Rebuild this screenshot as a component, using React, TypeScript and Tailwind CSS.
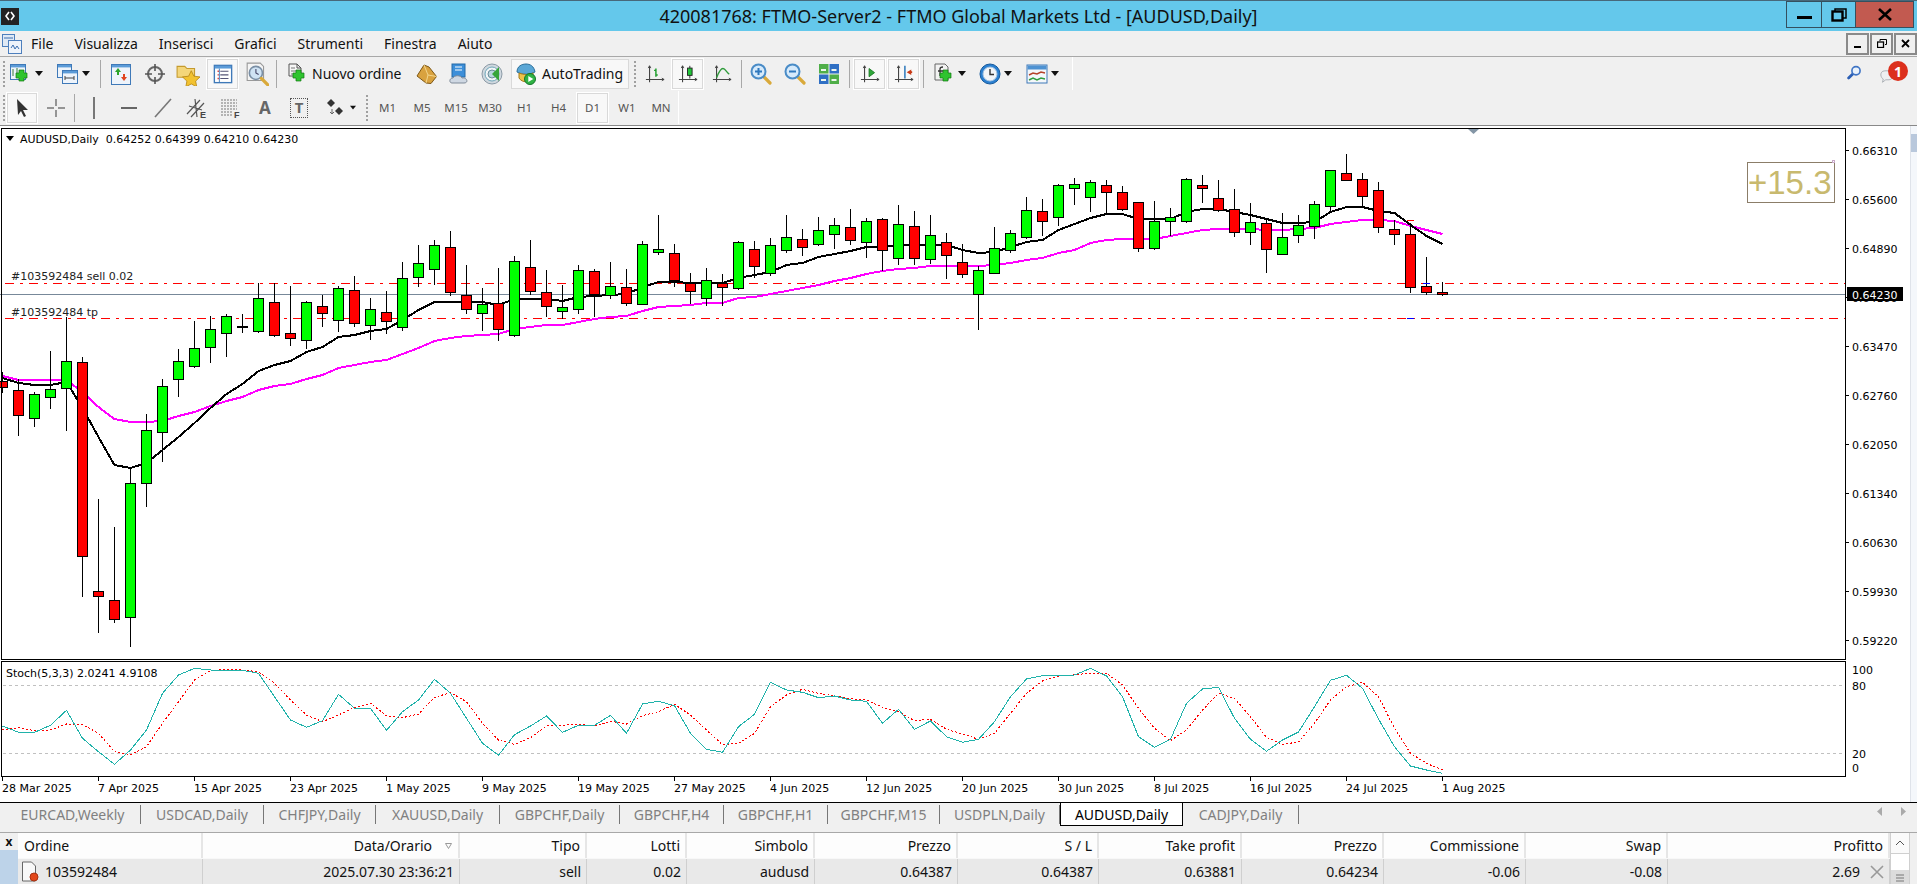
import type { ReactNode } from "react";

// [high, bodyTop, bodyBottom, low, green?]
const BARS: [number, number, number, number, number][] = [
  [372, 381, 387, 393, 0], [379, 390, 415, 436, 0], [392, 394, 418, 427, 1], [351, 389, 397, 409, 1], [317, 361, 388, 431, 1],
  [357, 362, 556, 597, 0], [499, 591, 596, 633, 0], [527, 600, 619, 623, 0], [467, 483, 617, 647, 1], [414, 430, 483, 507, 1],
  [379, 386, 432, 462, 1], [349, 361, 379, 397, 1], [321, 348, 366, 368, 1], [316, 329, 347, 363, 1], [314, 316, 333, 357, 1],
  [314, 326, 327, 333, 1], [283, 298, 331, 333, 1], [283, 302, 335, 337, 0], [286, 333, 338, 346, 0], [301, 302, 340, 349, 1],
  [295, 306, 313, 327, 0], [286, 288, 320, 332, 1], [276, 290, 323, 327, 0], [298, 309, 325, 340, 1], [291, 312, 321, 334, 0],
  [262, 278, 327, 331, 1], [245, 263, 277, 287, 1], [240, 245, 269, 285, 1], [231, 247, 292, 296, 0], [265, 295, 309, 314, 0],
  [288, 304, 313, 331, 1], [268, 303, 329, 341, 0], [256, 261, 335, 337, 1], [240, 267, 291, 295, 0], [270, 292, 306, 317, 0],
  [285, 307, 311, 319, 1], [265, 270, 309, 314, 1], [269, 271, 294, 317, 0], [262, 286, 295, 299, 1], [269, 287, 303, 306, 0],
  [241, 244, 304, 304, 1], [215, 249, 252, 255, 1], [244, 253, 280, 287, 0], [273, 283, 291, 304, 0], [268, 280, 298, 306, 1],
  [274, 283, 287, 306, 0], [241, 242, 288, 290, 1], [241, 249, 266, 278, 0], [238, 245, 273, 276, 1], [215, 237, 250, 253, 1],
  [229, 239, 247, 256, 0], [217, 230, 244, 246, 1], [218, 225, 234, 249, 1], [209, 227, 240, 245, 0], [218, 221, 242, 258, 1],
  [218, 219, 250, 271, 0], [205, 224, 258, 265, 1], [211, 226, 258, 265, 0], [215, 235, 259, 264, 1], [233, 242, 255, 279, 0],
  [244, 262, 274, 278, 0], [266, 270, 294, 330, 1], [227, 248, 273, 273, 1], [230, 233, 250, 253, 1], [197, 210, 237, 239, 1],
  [199, 211, 221, 236, 0], [184, 185, 217, 226, 1], [178, 184, 188, 205, 1], [180, 182, 197, 212, 1], [180, 185, 192, 214, 0],
  [186, 192, 209, 211, 0], [202, 202, 248, 252, 0], [201, 221, 248, 250, 1], [208, 217, 221, 236, 1], [178, 179, 221, 223, 1],
  [175, 185, 188, 203, 0], [180, 198, 210, 212, 0], [189, 209, 232, 237, 0], [203, 222, 232, 245, 1], [220, 223, 249, 273, 0],
  [213, 237, 254, 255, 1], [215, 225, 235, 243, 1], [201, 204, 226, 239, 1], [170, 170, 206, 212, 1], [154, 173, 180, 181, 0],
  [173, 179, 196, 206, 0], [182, 190, 227, 233, 0], [220, 229, 234, 245, 0], [223, 234, 287, 293, 0], [257, 286, 292, 295, 0],
  [282, 292, 294, 296, 0],
];

const MA_FAST = [378, 383, 385, 385, 382, 408, 437, 465, 468, 463, 450, 437, 423, 408, 394, 384, 371, 365, 361, 352, 347, 337, 335, 331, 329, 320, 310, 302, 302, 302, 302, 305, 299, 299, 299, 301, 297, 296, 295, 294, 287, 282, 282, 283, 283, 283, 278, 275, 272, 265, 263, 257, 254, 251, 247, 247, 245, 245, 245, 245, 250, 253, 252, 247, 242, 240, 230, 224, 218, 214, 214, 219, 219, 219, 212, 209, 209, 212, 215, 219, 223, 223, 222, 212, 207, 207, 211, 213, 225, 236, 244];
const MA_SLOW = [376, 380, 380, 380, 380, 392, 407, 419, 422, 422, 421, 416, 412, 406, 401, 397, 390, 386, 384, 379, 375, 368, 365, 362, 360, 354, 348, 341, 338, 336, 335, 334, 329, 327, 325, 325, 322, 319, 317, 316, 311, 307, 306, 305, 303, 303, 298, 297, 294, 291, 288, 285, 281, 278, 274, 271, 269, 268, 266, 266, 266, 266, 265, 263, 260, 258, 253, 250, 243, 240, 239, 239, 239, 236, 233, 230, 229, 229, 229, 230, 230, 229, 228, 224, 222, 220, 220, 221, 226, 230, 234];
// stochastic lines, pixel rows under y=650 at 3x
const STOCH_MAIN = [228, 247, 247, 226, 181, 265, 305, 343, 300, 240, 130, 75, 55, 60, 61, 61, 70, 140, 210, 232, 212, 133, 175, 175, 241, 185, 150, 88, 130, 205, 280, 316, 254, 228, 198, 247, 226, 226, 196, 250, 162, 154, 167, 250, 298, 307, 230, 193, 97, 120, 127, 143, 138, 150, 154, 220, 178, 238, 213, 260, 277, 268, 215, 140, 87, 77, 76, 75, 55, 78, 140, 260, 292, 268, 160, 117, 112, 205, 268, 304, 270, 246, 170, 91, 76, 115, 207, 290, 348, 360, 370];
const STOCH_SIGNAL = [240, 233, 242, 240, 222, 224, 250, 305, 314, 290, 220, 155, 90, 62, 58, 60, 65, 100, 150, 195, 215, 195, 172, 160, 197, 203, 192, 142, 128, 155, 220, 270, 283, 263, 228, 226, 223, 228, 214, 222, 197, 185, 163, 195, 240, 284, 280, 250, 170, 135, 118, 130, 138, 146, 150, 172, 185, 212, 208, 238, 252, 268, 250, 190, 130, 93, 78, 74, 70, 70, 105, 175, 235, 272, 240, 180, 130, 145, 200, 262, 283, 276, 220, 150, 110, 97, 140, 235, 310, 340, 360];

const PRICES = ["0.66310", "0.65600", "0.64890", "0.64180", "0.63470", "0.62760", "0.62050", "0.61340", "0.60630", "0.59930", "0.59220"];
const DATES = ["28 Mar 2025", "7 Apr 2025", "15 Apr 2025", "23 Apr 2025", "1 May 2025", "9 May 2025", "19 May 2025", "27 May 2025", "4 Jun 2025", "12 Jun 2025", "20 Jun 2025", "30 Jun 2025", "8 Jul 2025", "16 Jul 2025", "24 Jul 2025", "1 Aug 2025"];
const MENU = ["File", "Visualizza", "Inserisci", "Grafici", "Strumenti", "Finestra", "Aiuto"];
const TABS: [string, string][] = [
  ["EURCAD,Weekly", "w-[136px]"], ["USDCAD,Daily", "w-[123px]"], ["CHFJPY,Daily", "w-[112px]"], ["XAUUSD,Daily", "w-[124px]"],
  ["GBPCHF,Daily", "w-[120px]"], ["GBPCHF,H4", "w-[104px]"], ["GBPCHF,H1", "w-[104px]"], ["GBPCHF,M15", "w-[112px]"], ["USDPLN,Daily", "w-[120px]"],
];
const COLS = [
  ["Ordine", "103592484"], ["Data/Orario", "2025.07.30 23:36:21"], ["Tipo", "sell"], ["Lotti", "0.02"], ["Simbolo", "audusd"], ["Prezzo", "0.64387"],
  ["S / L", "0.64387"], ["Take profit", "0.63881"], ["Prezzo", "0.64234"], ["Commissione", "-0.06"], ["Swap", "-0.08"], ["Profitto", "2.69"],
];
const GRID = "grid grid-cols-[185px_257px_127px_100px_128px_143px_141px_143px_142px_142px_142px_222px]";

const pts = (ys: number[]) => ys.map((y, i) => `${2.5 + 16 * i},${y}`).join(" ");
const stochPts = (vs: number[]) => vs.map((v, i) => `${2.5 + 16 * i},${(650 + v / 3).toFixed(1)}`).join(" ");

function I({ children, s = 22 }: { children: ReactNode; s?: number }) {
  return (
    <svg width={s} height={s} viewBox="0 0 22 22" fill="none">
      {children}
    </svg>
  );
}

const Plus = ({ x = 11, y = 11 }: { x?: number; y?: number }) => (
  <path d={`M${x + 3} ${y}h5v3h3v5h-3v3h-5v-3h-3v-5h3z`} fill="#2fc42f" stroke="#127a12" strokeWidth=".7" />
);
const Axes = () => (
  <>
    <path d="M5 2v18M1 17h20" stroke="#444" strokeWidth="1.2" />
    <path d="M3.5 4.5 5 2l1.5 2.5M18.5 15.5 21 17l-2.5 1.5" stroke="#444" strokeWidth="1" />
  </>
);
const Win = ({ x, y, w, h }: { x: number; y: number; w: number; h: number }) => (
  <>
    <rect x={x + 0.5} y={y + 0.5} width={w} height={h} fill="#eef4fb" stroke="#3f79b8" />
    <rect x={x + 1} y={y + 1} width={w - 1} height={2.4} fill="#5b9bd8" />
  </>
);
const Magnifier = ({ minus }: { minus?: boolean }) => (
  <I>
    <path d="m13 13 7 7" stroke="#d9a93a" strokeWidth="3.2" strokeLinecap="round" />
    <circle cx="8.5" cy="8.5" r="7" fill="#d6eafb" stroke="#4a8cc7" strokeWidth="2" />
    <path d={minus ? "M5 8.5h7" : "M5 8.5h7M8.5 5v7"} stroke="#2f78bd" strokeWidth="2" />
  </I>
);

const Caret = () => (
  <svg width="8" height="5" viewBox="0 0 8 5">
    <path d="M0 0h8L4 5z" fill="#111" />
  </svg>
);
const Sep = () => <div className="h-[28px] w-px bg-[#a8a8a8]" />;
const Handle = ({ cls = "" }: { cls?: string }) => <div className={`h-[26px] w-[2px] border-l-2 border-dotted border-[#a0a0a0] ${cls}`} />;

function Cell({ w, ml = "", sel, children }: { w: string; ml?: string; sel?: boolean; children: ReactNode }) {
  return (
    <div className={`flex h-full items-center justify-center ${w} ${ml}`}>
      {sel ? <div className="flex h-[30px] w-full items-center justify-center border border-[#d9d9d9] bg-[#f8f8f8] outline outline-white">{children}</div> : children}
    </div>
  );
}

function Toolbars() {
  return (
    <div className="flex shrink-0 flex-col text-[#111]">
      {/* standard + charts toolbar */}
      <div className="flex h-[33px] items-center bg-[#f0f0f0]">
        <div className="flex h-full w-[1073px] items-center border-r border-white">
          <div className="flex w-[7px] justify-center"><Handle /></div>
          <Cell w="w-[26px]">
            <I><Win x={1} y={1} w={15} h={15} /><path d="M4 6v7M8 5v6" stroke="#3a7a3a" /><Plus x={7} y={7} /></I>
          </Cell>
          <Cell w="w-[12px]"><Caret /></Cell>
          <Cell w="w-[30px]" ml="ml-[7px]">
            <I><Win x={1} y={1} w={14} h={13} /><Win x={6} y={7} w={15} h={13} /><path d="M9 15h9M9 13v4M18 13v4" stroke="#444" /></I>
          </Cell>
          <Cell w="w-[8px]"><Caret /></Cell>
          <div className="ml-[10px]"><Sep /></div>
          <Cell w="w-[30px]" ml="ml-[5px]">
            <I><Win x={1} y={1} w={19} h={20} /><path d="m8 5 3 4H9v3H7V9H5z" fill="#2ca52c" /><path d="m14 18-3-4h2v-3h2v3h2z" fill="#e0451f" /></I>
          </Cell>
          <Cell w="w-[34px]" ml="ml-[2px]">
            <I><circle cx="11" cy="11" r="7" stroke="#666" strokeWidth="2" /><path d="M11 1v7M11 14v7M1 11h7M14 11h7" stroke="#555" strokeWidth="1.6" /></I>
          </Cell>
          <Cell w="w-[32px]">
            <I s={24}><path d="M1 4h7l2 2h7v8H1z" fill="#f4d67a" stroke="#c59a2d" /><path d="m14 8 2.4 5 5.6.7-4 3.8 1 5.3-5-2.7-5 2.7 1-5.3-4-3.8 5.6-.7z" fill="#f2c230" stroke="#b98a18" strokeWidth=".8" /></I>
          </Cell>
          <Cell w="w-[31px]" ml="ml-[3px]" sel>
            <I s={20}><rect x="1.5" y="1.5" width="19" height="19" fill="#fff" stroke="#3f79b8" strokeWidth="1.5" /><rect x="2" y="2" width="18" height="3" fill="#5b9bd8" /><path d="M5 8h1.5M5 12h1.5M5 16h1.5" stroke="#d33" strokeWidth="1.5" /><path d="M8 8h9M8 12h9M8 16h9" stroke="#557" strokeWidth="1.2" /><path d="M7 5v15" stroke="#3f79b8" /></I>
          </Cell>
          <Cell w="w-[38px]">
            <I s={24}><path d="M2 1h12l3 3v13H2z" fill="#f4f4f4" stroke="#999" /><circle cx="10" cy="10" r="6" fill="#cfe3f4" stroke="#7a8fa5" strokeWidth="1.5" /><path d="M10 6.5V10l2.5 1.5" stroke="#446" /><path d="m15 15 7 7" stroke="#d9a93a" strokeWidth="3" strokeLinecap="round" /></I>
          </Cell>
          <Sep />
          <Cell w="w-[22px]" ml="ml-[10px]">
            <I><path d="M2 1h8l4 4v8H2zM10 1v4h4" fill="#f6f6f6" stroke="#555" /><path d="M4 5h4M4 8h7M4 11h4" stroke="#777" /><Plus x={6} y={7} /></I>
          </Cell>
          <span className="ml-[3px] w-[94px] whitespace-nowrap text-[14px]">Nuovo ordine</span>
          <Cell w="w-[42px]">
            <I><path d="M8 2 1 13l9 7 5 .5 5.5-7L13 4z" fill="#d9a23f" stroke="#7d5716" /><path d="m8 2 4 10 8.5 1.5M12 12l-2 8" stroke="#f3d68d" /></I>
          </Cell>
          <Cell w="w-[22px]">
            <I><rect x="4" y="1" width="13" height="13" fill="#3d8fd9" stroke="#256aa8" /><path d="M7 4h7M7 7h7" stroke="#fff" /><path d="M4 20c-3 0-3-5 1-5 1-3 8-3 9 0 5-1 7 5 2 5z" fill="#cfd8e3" stroke="#7f8b99" /></I>
          </Cell>
          <Cell w="w-[22px]" ml="ml-[11px]">
            <I><circle cx="11" cy="11" r="10" fill="#cfd8df" stroke="#8b9aa6" /><circle cx="11" cy="11" r="7" fill="#f2f5f7" stroke="#6ea6b8" /><circle cx="11" cy="11" r="4" fill="#b9d6de" stroke="#6a8b99" /><path d="M11 11 18 4v14z" fill="#35a53a" /></I>
          </Cell>
          <div className="ml-[8px] flex h-[30px] w-[118px] items-center border border-[#d9d9d9] bg-[#f8f8f8] pl-[3px]">
            <I><path d="M2 9c0-6 5-8 9-8s8 2 9 8c-6 3-12 3-18 0z" fill="#5aa7d6" stroke="#2d6f99" /><path d="M4 10c5 2 10 2 14 0v5c-3 5-11 5-14 0z" fill="#efc24a" stroke="#a67c1a" /><circle cx="15" cy="16" r="5.5" fill="#2fb344" stroke="#16752a" /><path d="m13.3 13 5 3-5 3z" fill="#fff" /></I>
            <span className="ml-[5px] whitespace-nowrap text-[14px]">AutoTrading</span>
          </div>
          <Handle cls="ml-[5px]" />
          <Cell w="w-[34px]" ml="ml-[2px]">
            <I s={20}><Axes /><path d="M12 5v9M10 7h2M12 12h2" stroke="#1f9d2c" strokeWidth="1.6" /></I>
          </Cell>
          <Cell w="w-[31px]" sel>
            <I s={20}><Axes /><path d="M13 2v14" stroke="#222" /><rect x="10.5" y="4.5" width="5" height="8" fill="#22c53a" stroke="#222" /></I>
          </Cell>
          <Cell w="w-[38px]">
            <I s={20}><Axes /><path d="M5 15c2-5 4-10 7-10s4 5 7 6" stroke="#2e9b3a" strokeWidth="1.5" /></I>
          </Cell>
          <Sep />
          <Cell w="w-[38px]"><Magnifier /></Cell>
          <Cell w="w-[30px]"><Magnifier minus /></Cell>
          <Cell w="w-[38px]">
            <I><rect x="1" y="1" width="9.5" height="9.5" fill="#4fae48" /><rect x="11.5" y="1" width="9.5" height="9.5" fill="#2f6fc4" /><rect x="1" y="11.5" width="9.5" height="9.5" fill="#2f6fc4" /><rect x="11.5" y="11.5" width="9.5" height="9.5" fill="#4fae48" /><path d="M3 6h5v2H3zM13.5 6h5v2h-5zM3 16h5v2H3zM13.5 16h5v2h-5z" fill="#eef6ee" /></I>
          </Cell>
          <div className="ml-px"><Sep /></div>
          <Cell w="w-[31px]" ml="ml-[4px]" sel>
            <I s={20}><Axes /><path d="M10 5v9l6-4.5z" fill="#2fa83a" stroke="#1a7a25" /></I>
          </Cell>
          <Cell w="w-[31px]" ml="ml-[3px]" sel>
            <I s={20}><Axes /><path d="M12 2v14" stroke="#2573b8" strokeWidth="1.6" /><path d="m14 9 5-3v2h1v2h-1v2z" fill="#c83a16" /></I>
          </Cell>
          <div className="ml-[4px]"><Sep /></div>
          <Cell w="w-[24px]" ml="ml-[8px]">
            <I><path d="M2 1h10l3 3v13H2z" fill="#f2f2f2" stroke="#666" /><path d="M7 13V6q0-2 3-2M5 8h5" stroke="#333" strokeWidth="1.3" /><Plus x={7} y={7} /></I>
          </Cell>
          <Cell w="w-[12px]"><Caret /></Cell>
          <Cell w="w-[24px]" ml="ml-[10px]">
            <I><circle cx="11" cy="11" r="10" fill="#2a7fd0" stroke="#175a9c" /><circle cx="11" cy="11" r="7" fill="#f2f5f8" stroke="#a9c6e2" /><path d="M11 6v5.5h4" stroke="#333" strokeWidth="1.4" /></I>
          </Cell>
          <Cell w="w-[12px]"><Caret /></Cell>
          <Cell w="w-[24px]" ml="ml-[11px]">
            <I><rect x="1" y="2" width="20" height="18" fill="#f4f7fa" stroke="#3f79b8" /><rect x="1.5" y="2.5" width="19" height="4" fill="#4e92d2" /><path d="m3 12 4-2 4 1 4-2 4 1" stroke="#b5432a" strokeWidth="1.4" /><path d="m3 17 4-2 4 2 4-2 4 1" stroke="#2f9d40" strokeWidth="1.4" /></I>
          </Cell>
          <Cell w="w-[12px]"><Caret /></Cell>
        </div>
        <div className="relative flex-1 self-stretch">
          <div className="absolute left-[774px] top-[8px]">
            <I s={18}><path d="m8 10-6 6" stroke="#2c5fb5" strokeWidth="3.4" strokeLinecap="round" /><circle cx="11" cy="7" r="5" fill="#eaf2fb" stroke="#3f74c4" strokeWidth="2" /></I>
          </div>
          <div className="absolute left-[807px] top-[13px]">
            <I s={18}><path d="M6 1c-4 0-5 3-5 5s2 5 3 5l-1 4 4-3h4c3 0 5-3 5-6s-3-5-5-5z" fill="#eef0f2" stroke="#a0a6ac" /></I>
          </div>
          <div className="absolute left-[815px] top-[4px] flex h-[20px] w-[20px] items-center justify-center rounded-full bg-[#dc2f1c] text-[14px] font-bold text-white">1</div>
        </div>
      </div>
      {/* line studies + periods toolbar */}
      <div className="mt-px flex h-[33px] items-center bg-[#f0f0f0]">
        <div className="flex h-full w-[679px] items-center border-r border-white">
          <div className="flex w-[7px] justify-center"><Handle /></div>
          <Cell w="w-[30px]" sel>
            <I><path d="m6 2 1 16 3-4 3 6 2-1-3-6h5z" fill="#333" /></I>
          </Cell>
          <Cell w="w-[37px]">
            <I><path d="M11 2v7M11 13v7M2 11h7M13 11h7" stroke="#777" strokeWidth="1.5" /></I>
          </Cell>
          <Sep />
          <Cell w="w-[37px]"><div className="h-[22px] w-[2px] bg-[#777]" /></Cell>
          <Cell w="w-[34px]"><div className="h-[2px] w-[16px] bg-[#666]" /></Cell>
          <Cell w="w-[34px]"><I><path d="m3 20 16-18" stroke="#777" strokeWidth="1.6" /></I></Cell>
          <Cell w="w-[34px]">
            <I><path d="m1 17 13-14M5 20 18 6M9 2l2 18M3 9l13 4" stroke="#555" strokeWidth="1.2" /><text x="14" y="21" fontSize="9" fontWeight="700" fill="#444" className="font-['Liberation_Sans',sans-serif]">E</text></I>
          </Cell>
          <Cell w="w-[34px]">
            <I><path d="M1 3h16M1 6h16M1 9h16M1 12h16M1 15h12M1 18h12" stroke="#777" strokeDasharray="2 1" /><text x="14" y="21" fontSize="9" fontWeight="700" fill="#444" className="font-['Liberation_Sans',sans-serif]">F</text></I>
          </Cell>
          <Cell w="w-[34px]"><span className="text-[17px] font-bold leading-none text-[#666]">A</span></Cell>
          <Cell w="w-[34px]">
            <div className="flex h-[20px] w-[18px] items-center justify-center border border-dotted border-[#555] text-[15px] font-bold leading-none text-[#666]">T</div>
          </Cell>
          <Cell w="w-[30px]" ml="ml-[4px]">
            <I><path d="m7 2 4 4-4 4-4-4z" fill="#333" /><path d="m15 10 4 4-4 4-4-4z" fill="#333" /><path d="M8 12v5M6 15l2 2 2-2" stroke="#666" /></I>
          </Cell>
          <Cell w="w-[6px]"><Caret /></Cell>
          <Handle cls="ml-[10px]" />
          <div className="ml-[2px] flex h-full items-center text-[11.5px] text-[#555]">
            <Cell w="w-[35px]">M1</Cell>
            <Cell w="w-[34px]">M5</Cell>
            <Cell w="w-[34px]">M15</Cell>
            <Cell w="w-[34px]">M30</Cell>
            <Cell w="w-[35px]">H1</Cell>
            <Cell w="w-[33px]">H4</Cell>
            <Cell w="w-[31px]" ml="ml-[2px]" sel>D1</Cell>
            <Cell w="w-[34px]" ml="ml-[2px]">W1</Cell>
            <Cell w="w-[34px]">MN</Cell>
          </div>
        </div>
      </div>
    </div>
  );
}

function Chart() {
  return (
    <svg width="1910" height="676" viewBox="0 126 1910 676" className="block font-['DejaVu_Sans',sans-serif]" fontSize="11">
      <g shapeRendering="crispEdges">
        <line x1="0" x2="1845" y1="294.5" y2="294.5" stroke="#778899" />
        <line x1="5" x2="1845" y1="283.5" y2="283.5" stroke="#ff0000" strokeDasharray="9 6 3 6" />
        <line x1="5" x2="1845" y1="318.5" y2="318.5" stroke="#ff0000" strokeDasharray="9 6 3 6" />
        <polyline points={pts(MA_SLOW)} fill="none" stroke="#ff00ff" strokeWidth="2" />
        <polyline points={pts(MA_FAST)} fill="none" stroke="#000" strokeWidth="2" />
        {BARS.map(([hi, top, bot, lo, up], i) => {
          const x = 2 + 16 * i;
          return (
            <g key={i}>
              <rect x={x} y={hi} width="1" height={lo - hi} fill="#000" />
              <rect x={x - 4.5} y={top + 0.5} width="10" height={bot - top} fill={up ? "#00ff00" : "#ff0000"} stroke="#000" />
            </g>
          );
        })}
        <rect x="1407" y="318" width="7" height="1" fill="#0000ff" />
        <rect x="1423" y="283" width="7" height="1" fill="#0000ff" />
        <rect x="1407" y="220" width="7" height="1" fill="#ff0000" />
        <rect x="1.5" y="128.5" width="1844" height="531" fill="none" stroke="#000" />
        <rect x="1.5" y="661.5" width="1844" height="115" fill="none" stroke="#000" />
        {PRICES.map((p, i) => (
          <rect key={p} x="1846" y={150 + 49 * i} width="3" height="1" fill="#000" />
        ))}
        {DATES.map((d, i) => (
          <rect key={d} x={2 + 96 * i} y="777" width="1" height="4" fill="#000" />
        ))}
        <line x1="3" x2="1845" y1="685.5" y2="685.5" stroke="#c0c0c0" strokeDasharray="3 3" />
        <line x1="3" x2="1845" y1="753.5" y2="753.5" stroke="#c0c0c0" strokeDasharray="3 3" />
        <polyline points={stochPts(STOCH_SIGNAL)} fill="none" stroke="#ff0000" strokeDasharray="2 2" />
        <polyline points={stochPts(STOCH_MAIN)} fill="none" stroke="#20b2aa" />
      </g>
      <path d="M1468 129h11l-5.5 5z" fill="#8496a6" />
      <path d="M6 136h8l-4 5z" fill="#000" />
      <text x="20" y="143" fill="#000">AUDUSD,Daily&#160;&#160;0.64252 0.64399 0.64210 0.64230</text>
      <text x="11" y="280" fill="#222">#103592484 sell 0.02</text>
      <text x="11" y="316" fill="#222">#103592484 tp</text>
      <text x="6" y="677" fill="#000">Stoch(5,3,3) 2.0241 4.9108</text>
      {PRICES.map((p, i) => (
        <text key={p} x="1852" y={154.5 + 49 * i} fill="#000">{p}</text>
      ))}
      <rect x="1847" y="287" width="56" height="14" fill="#000" />
      <text x="1852" y="298.5" fill="#fff">0.64230</text>
      <text x="1852" y="674" fill="#000">100</text>
      <text x="1852" y="690" fill="#000">80</text>
      <text x="1852" y="758" fill="#000">20</text>
      <text x="1852" y="772" fill="#000">0</text>
      {DATES.map((d, i) => (
        <text key={d} x={2 + 96 * i} y="792" fill="#000">{d}</text>
      ))}
      <rect x="1747.5" y="162.5" width="87" height="40" fill="#fff" stroke="#8b7d68" shapeRendering="crispEdges" />
      <rect x="1832.5" y="160.5" width="2" height="2" fill="#fff" stroke="#c8a8c8" shapeRendering="crispEdges" />
      <text x="1748" y="194" fill="#c8b96e" fontSize="33" className="font-['Liberation_Sans',sans-serif]">+15.3</text>
    </svg>
  );
}

export default function App() {
  return (
    <div className="flex h-[884px] w-[1917px] flex-col overflow-hidden bg-[#f0f0f0] font-['Noto_Sans',sans-serif] text-[14px] text-[#111]">
      {/* title bar */}
      <div className="grid h-[31px] shrink-0 grid-cols-[1fr_auto_1fr] items-center border-t border-[#47687a] bg-[#64c8eb]">
        <div className="pl-px">
          <div className="flex h-[17px] w-[18px] items-center justify-center bg-[#232323]">
            <svg width="10" height="10" viewBox="0 0 10 10"><path d="M4 1 1 5l3 4M6 1l3 4-3 4" stroke="#fff" strokeWidth="1.6" fill="none" /></svg>
          </div>
        </div>
        <div className="whitespace-nowrap text-[18px] leading-none text-[#111]">420081768: FTMO-Server2 - FTMO Global Markets Ltd - [AUDUSD,Daily]</div>
        <div className="flex h-full items-start justify-end pr-[3px]">
          <div className="flex h-[27px] w-[36px] items-center justify-center border border-[#34505f]">
            <div className="mt-[6px] h-[3px] w-[15px] bg-black" />
          </div>
          <div className="flex h-[27px] w-[34px] items-center justify-center border-y border-r border-[#34505f]">
            <svg width="16" height="14" viewBox="0 0 16 14"><path d="M4 3V1h11v9h-3" stroke="#000" strokeWidth="1.5" fill="none" /><rect x="1.5" y="3.5" width="10" height="9" stroke="#000" strokeWidth="2.4" fill="none" /></svg>
          </div>
          <div className="flex h-[27px] w-[58px] items-center justify-center border-y border-r border-[#34505f] bg-[#c25a50]">
            <svg width="14" height="13" viewBox="0 0 14 13"><path d="m1 1 12 11M13 1 1 12" stroke="#000" strokeWidth="2.6" /></svg>
          </div>
        </div>
      </div>

      {/* menu */}
      <div className="flex h-[26px] shrink-0 items-center border-b border-[#a8a8a8] bg-[#f0f0f0]">
        <div className="ml-[2px] w-[29px]">
          <svg width="20" height="20" viewBox="0 0 20 20"><rect x=".5" y=".5" width="12" height="12" fill="#dfe9f5" stroke="#4d7fbd" /><rect x="6.5" y="6.5" width="13" height="13" fill="#eef3fa" stroke="#4d7fbd" /><path d="M2 4h9M9 14l2-3 2 4 2-3 2 3" stroke="#3c6fb0" fill="none" /></svg>
        </div>
        <div className="flex gap-[21px] text-[14px]">
          {MENU.map((m) => (
            <span key={m}>{m}</span>
          ))}
        </div>
        <div className="ml-auto flex h-[22px] gap-px">
          {["min", "restore", "close"].map((b) => (
            <div key={b} className="flex w-[23px] items-center justify-center border-2 border-[#8a8a8a]">
              {b === "min" && <div className="mt-[6px] h-[2px] w-[7px] bg-black" />}
              {b === "restore" && <svg width="10" height="9" viewBox="0 0 10 9"><path d="M3 2V.5h6.5v5H8" stroke="#000" fill="none" /><rect x=".5" y="3" width="6" height="5.5" stroke="#000" strokeWidth="1.3" fill="none" /></svg>}
              {b === "close" && <svg width="9" height="9" viewBox="0 0 9 9"><path d="m1 1 7 7M8 1 1 8" stroke="#000" strokeWidth="1.8" /></svg>}
            </div>
          ))}
        </div>
      </div>

      <Toolbars />

      {/* chart */}
      <div className="mt-[1px] flex h-[677px] shrink-0 border-t border-[#888] bg-white">
        <Chart />
        <div className="flex-1 border-l border-[#dfe3ea] bg-[#f4f7fb] pt-[8px]">
          <div className="h-[18px] w-full bg-[#b9c8dc]" />
        </div>
      </div>

      {/* chart tabs */}
      <div className="flex h-[25px] shrink-0 items-start border-t border-black bg-[#f0f0f0] pl-[5px] text-[#808080]">
        {TABS.map(([t, w]) => (
          <div key={t} className={`mt-[2px] flex h-[19px] items-center justify-center border-r border-[#777] ${w}`}>{t}</div>
        ))}
        <div className="flex h-[23px] w-[123px] items-center justify-center border-x border-b border-black bg-white text-black">AUDUSD,Daily</div>
        <div className="mt-[2px] flex h-[19px] w-[116px] items-center justify-center border-r border-[#777]">CADJPY,Daily</div>
        <div className="ml-auto mt-[4px] flex gap-[19px] pr-[11px]">
          <svg width="5" height="9" viewBox="0 0 5 9"><path d="M5 0v9L0 4.500z" fill="#aaa" /></svg>
          <svg width="5" height="9" viewBox="0 0 5 9"><path d="M0 0v9l5-4.500z" fill="#aaa" /></svg>
        </div>
      </div>

      {/* terminal */}
      <div className="mt-[5px] flex h-[52px] shrink-0 border-t border-[#a8a8a8]">
        <div className="flex w-[18px] flex-col">
          <div className="flex h-[17px] items-center justify-center text-[12px] font-bold">x</div>
          <div className="flex-1 bg-[#bdd3e9]" />
        </div>
        <div className="flex-1 bg-[#f8f8f8]">
          <div className={`${GRID} h-[25px] bg-[#fdfdfd]`}>
            {COLS.map(([h], i) => (
              <div key={i} className={`flex items-center border-r-2 border-[#e6e6e6] ${i === 0 ? "pl-[6px]" : "justify-end pr-[5px]"}`}>
                <span>{h}</span>
                {i === 1 && (
                  <svg className="ml-[13px] mr-[1px]" width="7" height="6" viewBox="0 0 7 6"><path d="M.5.500h6L3.500 5.500z" fill="none" stroke="#999" /></svg>
                )}
              </div>
            ))}
          </div>
          <div className={`${GRID} mt-px h-[25px] bg-[#e9e9e9]`}>
            {COLS.map(([, v], i) => (
              <div key={i} className={`flex items-center border-r border-[#cfcfcf] ${i === 0 ? "pl-[3px]" : "justify-end pr-[5px]"}`}>
                {i === 0 && (
                  <svg className="mr-[6px]" width="18" height="21" viewBox="0 0 18 21"><path d="M1.500 1h9l4 4v15h-13z" fill="#f8f8f8" stroke="#666" /><circle cx="13" cy="16" r="4" fill="#e2471a" stroke="#a83010" /></svg>
                )}
                <span>{v}</span>
                {i === 11 && (
                  <svg className="ml-[10px]" width="14" height="14" viewBox="0 0 14 14"><path d="m1 1 12 12M13 1 1 13" stroke="#999" strokeWidth="1.6" /></svg>
                )}
              </div>
            ))}
          </div>
        </div>
        <div className="w-[27px]">
          <div className="flex h-[37px] w-[20px] flex-col border-x border-[#cfcfcf] bg-white">
            <div className="flex h-[21px] items-center justify-center border-b border-[#cfcfcf] bg-[#fafafa]">
              <svg width="10" height="6" viewBox="0 0 10 6"><path d="m1 5 4-4 4 4" stroke="#555" fill="none" /></svg>
            </div>
          </div>
          <div className="flex h-[15px] w-[20px] items-center justify-center border-x border-[#cfcfcf] bg-[#dcdcdc]">
            <svg width="10" height="8" viewBox="0 0 10 8"><path d="M1 1h8M1 4h8M1 7h8" stroke="#777" /></svg>
          </div>
        </div>
      </div>
    </div>
  );
}
